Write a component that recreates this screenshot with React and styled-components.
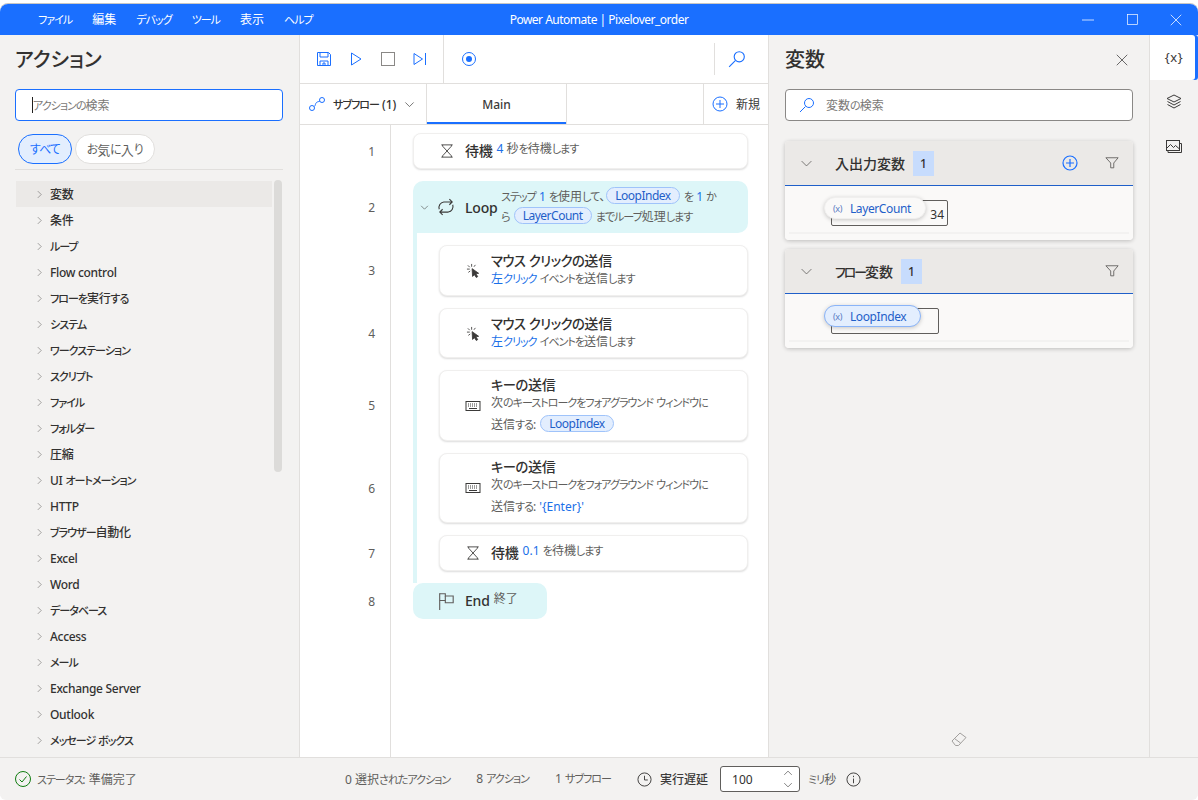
import { Children } from 'react';
import styled, { createGlobalStyle } from 'styled-components';

const BLUE = '#1a6fff';
const actions = ['変数', '条件', 'ループ', 'Flow control', 'フローを実行する', 'システム', 'ワークステーション', 'スクリプト', 'ファイル', 'フォルダー', '圧縮', 'UI オートメーション', 'HTTP', 'ブラウザー自動化', 'Excel', 'Word', 'データベース', 'Access', 'メール', 'Exchange Server', 'Outlook', 'メッセージ ボックス'];
const menus = ['ファイル', '編集', 'デバッグ', 'ツール', '表示', 'ヘルプ'];

//Kana in the target UI font is smaller than in Noto, so shrink those runs only.
const T = ({ children }) =>
  Children.map(children, (c) =>
    typeof c !== 'string'
      ? c
      : c.split(/([ぁ-ゖァ-ヶー]+)/).map((part, i) => (i % 2 ? <Kana key={i}>{part}</Kana> : part))
  );

//ICONS
const Svg = ({ size = 16, color = 'currentColor', w = 1, children }) => (
  <svg width={size} height={size} viewBox="0 0 16 16" fill="none" stroke={color} strokeWidth={w} style={{ display: 'block', flex: 'none' }}>
    {children}
  </svg>
);

const Chevron = ({ dir = 'right', size = 10, color = '#605e5c' }) => (
  <Svg size={size} color={color}>
    {dir === 'right' ? <path d="M5 2l6 6-6 6" /> : dir === 'up' ? <path d="M2 11l6-6 6 6" /> : <path d="M2 5l6 6 6-6" />}
  </Svg>
);
const SaveIcon = () => (
  <Svg size={16} color={BLUE}><path d="M1.500 1.500h11l2 2v11h-13z" /><path d="M4 1.500v4.500h8V1.500M4 14.500v-4.500h8v4.500M7 14.500v-2.500h2v2.500" /></Svg>
);
const PlayIcon = () => <Svg size={16} color={BLUE}><path d="M3.500 2l9.500 6-9.500 6z" /></Svg>;
const StopIcon = () => <Svg size={16} color="#8a8886"><rect x="1.500" y="1.500" width="13" height="13" /></Svg>;
const StepIcon = () => <Svg size={16} color={BLUE}><path d="M2 2.500l8.500 5.500-8.500 5.500z" /><path d="M13.500 2v12" /></Svg>;
const RecordIcon = () => (
  <Svg size={16} color={BLUE}><circle cx="8" cy="8" r="6.500" /><circle cx="8" cy="8" r="3" fill={BLUE} stroke="none" /></Svg>
);
const SearchIcon = ({ size = 18 }) => (
  <Svg size={size} color={BLUE}><circle cx="10" cy="6" r="4.500" /><path d="M6.500 9.500L1 15" /></Svg>
);
const SubflowIcon = () => (
  <Svg size={16} color={BLUE}><circle cx="3" cy="12" r="2.500" /><circle cx="13" cy="4" r="2.500" /><path d="M5.200 10.500c1.500-1 1-3 2.300-4s2-.8 3.200-1.200" /></Svg>
);
const PlusCircle = ({ size = 16, w = 1 }) => (
  <Svg size={size} color={BLUE} w={w}><circle cx="8" cy="8" r="7" /><path d="M8 4v8M4 8h8" /></Svg>
);
const Hourglass = () => (
  <Svg size={14} color="#3b3a39"><path d="M1.500 1h13M1.500 15h13M3 1v1.500L13 13.500V15M13 1v1.500L3 13.500V15" /></Svg>
);
const LoopIcon = () => (
  <Svg size={18} color="#3b3a39"><path d="M2 10A5 5 0 0 1 6 3.500h7.500M11 1l2.500 2.500L11 6" /><path d="M14 6a5 5 0 0 1-4 6.500H2.500M5 10l-2.500 2.500L5 15" /></Svg>
);
const ClickIcon = () => (
  <Svg size={15} color="#3b3a39" w={0.9}>
    <path d="M6 1v3M2 2.500l2 2M1 6.500h3M2.500 10l2-1.500M10 2l-1.500 2" />
    <path d="M6.500 6l7 5-3 .5 2 3-1.500 1-2-3-2 1.800z" fill="#3b3a39" />
  </Svg>
);
const KeyboardIcon = () => (
  <Svg size={16} color="#3b3a39"><rect x="1" y="3.500" width="14" height="9" /><path d="M3 6h10M3 8h10" strokeDasharray="1 1" /><path d="M4 10.500h8" /></Svg>
);
const FlagIcon = () => (
  <Svg size={18} color="#605e5c"><path d="M1.500 1v15" /><path d="M1.500 1.500h5v2h7v6h-7v-2h-5" /><path d="M6.500 3.500v4" /></Svg>
);
const FilterIcon = () => (
  <Svg size={14} color="#605e5c"><path d="M1 2h14L10 8v5.500H6.500V8z" /></Svg>
);
const CloseIcon = ({ size = 12, color = '#3b3a39' }) => <Svg size={size} color={color}><path d="M1 1l14 14M15 1L1 15" /></Svg>;
const LayersIcon = () => (
  <Svg size={16} color="#3b3a39"><path d="M8 1l7 3.500-7 3.500-7-3.500z" /><path d="M1.500 7.500L8 11l6.500-3.500M1.500 10.500L8 14l6.500-3.500" /></Svg>
);
const ImageIcon = () => (
  <Svg size={16} color="#3b3a39"><rect x="0.500" y="2.500" width="13" height="10" /><path d="M2 12.500v2h13.500v-9h-2M1 10l3.500-3.500 3 3 2-2 4 3.500" /></Svg>
);
const EraserIcon = () => (
  <Svg size={16} color="#a19f9d"><path d="M1 10l8-8 6 4.500-7.500 8H4.500z" /><path d="M3.500 7.500l6 4.500" /></Svg>
);
const CheckCircle = () => (
  <Svg size={16} color="#107c10"><circle cx="8" cy="8" r="7.500" /><path d="M4.500 8.500l2.500 2.500 4.500-5.500" /></Svg>
);
const ClockIcon = () => (
  <Svg size={15} color="#3b3a39"><circle cx="8" cy="8" r="7" /><path d="M8 4v4.500h3.500" /></Svg>
);
const InfoIcon = () => (
  <Svg size={15} color="#3b3a39"><circle cx="8" cy="8" r="7" /><path d="M8 7v5M8 4v1.500" /></Svg>
);

const App = () => (
  <>
    <GlobalStyle />
    <Window>
      <TitleBar>
        <MenuBar>{menus.map((m) => <MenuItem key={m}><T>{m}</T></MenuItem>)}</MenuBar>
        <WindowTitle>Power Automate | Pixelover_order</WindowTitle>
        <WindowControls>
          <WindowButton><Svg size={12} color="#fff"><path d="M0 8h16" /></Svg></WindowButton>
          <WindowButton><Svg size={11} color="#fff"><rect x="0.700" y="0.700" width="14.600" height="14.600" /></Svg></WindowButton>
          <WindowButton><CloseIcon size={12} color="#fff" /></WindowButton>
        </WindowControls>
      </TitleBar>

      <Main>
        <ActionsPanel>
          <PanelTitle>アクション</PanelTitle>
          <SearchBox $focused>
            <Caret />
            <Placeholder><T>アクションの検索</T></Placeholder>
          </SearchBox>
          <Pills>
            <Pill $active><T>すべて</T></Pill>
            <Pill><T>お気に入り</T></Pill>
          </Pills>
          <ActionList>
            <ActionItems>
              {actions.map((a, i) => (
                <ActionItem key={a} $hover={i === 0}>
                  <Chevron size={9} />
                  <span><T>{a}</T></span>
                </ActionItem>
              ))}
            </ActionItems>
            <ScrollThumb />
          </ActionList>
        </ActionsPanel>

        <Editor>
          <Toolbar>
            <ToolGroup>
              <ToolIcon><SaveIcon /></ToolIcon>
              <ToolIcon><PlayIcon /></ToolIcon>
              <ToolIcon><StopIcon /></ToolIcon>
              <ToolIcon><StepIcon /></ToolIcon>
            </ToolGroup>
            <RecordCell><RecordIcon /></RecordCell>
            <ToolSearch><SearchIcon size={18} /></ToolSearch>
          </Toolbar>
          <Tabs>
            <SubflowTab>
              <SubflowIcon />
              <span><T>サブフロー (1)</T></span>
              <Chevron dir="down" size={11} color="#3b3a39" />
            </SubflowTab>
            <MainTab>Main</MainTab>
            <NewTab>
              <PlusCircle size={16} />
              <span>新規</span>
            </NewTab>
          </Tabs>

          <Canvas>
            <Row>
              <LineNo>1</LineNo>
              <Slot>
                <Card $h={36}>
                  <CardIcon><Hourglass /></CardIcon>
                  <InlineBody>
                    <CardName>待機</CardName>
                    <CardDesc $raised><Val>4</Val> <T>秒を待機します</T></CardDesc>
                  </InlineBody>
                </Card>
              </Slot>
            </Row>
            <Row>
              <LineNo>2</LineNo>
              <Slot>
                <LoopCard>
                  <LoopChevron><Chevron dir="down" size={9} color="#3b3a39" /></LoopChevron>
                  <LoopIconCell><LoopIcon /></LoopIconCell>
                  <LoopName>Loop</LoopName>
                  <LoopDesc>
                    <T>ステップ </T><Val>1</Val><T> を使用して、</T><VarTag>LoopIndex</VarTag> <T>を </T><Val>1</Val><T> か</T><br />
                    <T>ら </T><VarTag>LayerCount</VarTag> <T>までループ処理します</T>
                  </LoopDesc>
                </LoopCard>
              </Slot>
            </Row>
            <Row $loop>
              <LineNo $loop>3</LineNo>
              <Slot>
                <LoopBody>
                  <Card $h={51}>
                    <CardIcon><ClickIcon /></CardIcon>
                    <StackBody $pad={3}>
                      <CardName><T>マウス クリックの送信</T></CardName>
                      <CardDesc><Val><T>左クリック</T></Val> <T>イベントを送信します</T></CardDesc>
                    </StackBody>
                  </Card>
                </LoopBody>
              </Slot>
            </Row>
            <Row $loop>
              <LineNo $loop>4</LineNo>
              <Slot>
                <LoopBody>
                  <Card $h={50}>
                    <CardIcon><ClickIcon /></CardIcon>
                    <StackBody $pad={3}>
                      <CardName><T>マウス クリックの送信</T></CardName>
                      <CardDesc><Val><T>左クリック</T></Val> <T>イベントを送信します</T></CardDesc>
                    </StackBody>
                  </Card>
                </LoopBody>
              </Slot>
            </Row>
            <Row $loop>
              <LineNo $loop>5</LineNo>
              <Slot>
                <LoopBody>
                  <Card $h={71}>
                    <CardIcon><KeyboardIcon /></CardIcon>
                    <StackBody>
                      <CardName><T>キーの送信</T></CardName>
                      <CardDesc><T>次のキーストロークをフォアグラウンド ウィンドウに</T></CardDesc>
                      <CardDesc $second><T>送信する: </T><VarTag>LoopIndex</VarTag></CardDesc>
                    </StackBody>
                  </Card>
                </LoopBody>
              </Slot>
            </Row>
            <Row $loop>
              <LineNo $loop>6</LineNo>
              <Slot>
                <LoopBody>
                  <Card $h={70}>
                    <CardIcon><KeyboardIcon /></CardIcon>
                    <StackBody>
                      <CardName><T>キーの送信</T></CardName>
                      <CardDesc><T>次のキーストロークをフォアグラウンド ウィンドウに</T></CardDesc>
                      <CardDesc $second><T>送信する: </T><Val>'{'{'}Enter{'}'}'</Val></CardDesc>
                    </StackBody>
                  </Card>
                </LoopBody>
              </Slot>
            </Row>
            <Row $loop>
              <LineNo $loop $last>7</LineNo>
              <Slot>
                <LoopBody $last>
                  <Card $h={36}>
                    <CardIcon><Hourglass /></CardIcon>
                    <InlineBody>
                      <CardName>待機</CardName>
                      <CardDesc $raised><Val>0.1</Val> <T>を待機します</T></CardDesc>
                    </InlineBody>
                  </Card>
                </LoopBody>
              </Slot>
            </Row>
            <Row $end>
              <LineNo>8</LineNo>
              <Slot>
                <EndCard>
                  <CardIcon><FlagIcon /></CardIcon>
                  <InlineBody>
                    <CardName>End</CardName>
                    <CardDesc $raised>終了</CardDesc>
                  </InlineBody>
                </EndCard>
              </Slot>
            </Row>
          </Canvas>
        </Editor>

        <VariablesPanel>
          <VarHead>
            <PanelTitle>変数</PanelTitle>
            <PanelClose><CloseIcon size={12} /></PanelClose>
          </VarHead>
          <SearchBox>
            <SearchIconCell><SearchIcon size={16} /></SearchIconCell>
            <Placeholder><T>変数の検索</T></Placeholder>
          </SearchBox>

          <Section $top={20}>
            <SectionHead>
              <Chevron dir="down" size={13} color="#605e5c" />
              <SectionTitle>入出力変数</SectionTitle>
              <Badge>1</Badge>
              <HeadTools>
                <PlusCircle size={16} w={1.200} />
                <FilterIcon />
              </HeadTools>
            </SectionHead>
            <SectionBody>
              <ValueBox $w={117}>
                <VarChip><XMark>(x)</XMark>LayerCount</VarChip>
                34
              </ValueBox>
            </SectionBody>
          </Section>

          <Section $top={9}>
            <SectionHead>
              <Chevron dir="down" size={13} color="#605e5c" />
              <SectionTitle><T>フロー変数</T></SectionTitle>
              <Badge>1</Badge>
              <HeadTools><FilterIcon /></HeadTools>
            </SectionHead>
            <SectionBody>
              <ValueBox $w={108}>
                <VarChip $selected><XMark>(x)</XMark>LoopIndex</VarChip>
              </ValueBox>
            </SectionBody>
          </Section>

          <EraserRow><EraserIcon /></EraserRow>
        </VariablesPanel>

        <SideRail>
          <RailTab $active>{'{x}'}</RailTab>
          <RailTab><LayersIcon /></RailTab>
          <RailTab><ImageIcon /></RailTab>
        </SideRail>
      </Main>

      <StatusBar>
        <StatusLeft>
          <CheckCircle />
          <span><T>ステータス: 準備完了</T></span>
        </StatusLeft>
        <StatusCounts>
          <span><T>0 選択されたアクション</T></span>
          <span><T>8 アクション</T></span>
          <span><T>1 サブフロー</T></span>
        </StatusCounts>
        <DelayGroup>
          <ClockIcon />
          <DelayLabel>実行遅延</DelayLabel>
          <Spinner>
            100
            <SpinArrows>
              <Chevron dir="up" size={10} color="#3b3a39" />
              <Chevron dir="down" size={10} color="#3b3a39" />
            </SpinArrows>
          </Spinner>
          <Unit><T>ミリ秒</T></Unit>
          <InfoIcon />
        </DelayGroup>
      </StatusBar>
    </Window>
  </>
);

//STYLING
const GlobalStyle = createGlobalStyle`
  html, body {
    margin: 0;
    padding: 0;
    background: #fff;
  }
  body {
    font-family: 'Noto Sans', 'Noto Sans CJK JP', sans-serif;
    font-size: 12px;
    font-feature-settings: 'palt';
    color: #323130;
    overflow: hidden;
    white-space: nowrap;
  }
`;

const Kana = styled.span`
  font-size: 0.92em;
  letter-spacing: -1px;
`;

const Window = styled.div`
  width: 1198px;
  height: 796px;
  margin-top: 4px;
  display: flex;
  flex-direction: column;
  border-radius: 8px 8px 6px 6px;
  overflow: hidden;
  box-shadow: 0 -1px 0 #c8c6c4;
`;

const TitleBar = styled.div`
  height: 31px;
  flex: none;
  display: grid;
  grid-template-columns: 1fr auto 1fr;
  align-items: center;
  background: ${BLUE};
  color: #fff;
`;

const MenuBar = styled.div`
  display: flex;
  gap: 20px;
  padding-left: 38px;
`;

const MenuItem = styled.span`
  line-height: 31px;
`;

const WindowTitle = styled.div`
  font-size: 12px;
  letter-spacing: -0.5px;
`;

const WindowControls = styled.div`
  display: flex;
  justify-content: flex-end;
`;

const WindowButton = styled.div`
  width: 44px;
  height: 31px;
  display: flex;
  align-items: center;
  justify-content: center;
`;

const Main = styled.div`
  flex: 1;
  min-height: 0;
  display: flex;
`;

const ActionsPanel = styled.div`
  width: 300px;
  flex: none;
  padding: 0 16px 0 15px;
  box-sizing: border-box;
  display: flex;
  flex-direction: column;
  background: #f3f2f1;
  border-right: 1px solid #e1dfdd;
`;

const PanelTitle = styled.div`
  font-size: 20px;
  font-weight: 500;
  line-height: 50px;
  height: 54px;
  color: #323130;
`;

const PanelClose = styled.div`
  margin-bottom: 4px;
`;

const SearchBox = styled.div`
  height: 32px;
  flex: none;
  box-sizing: border-box;
  display: flex;
  align-items: center;
  background: #fff;
  border: 1px solid ${(p) => (p.$focused ? BLUE : '#8a8886')};
  border-radius: 4px;
  padding-left: 16px;
`;

const Caret = styled.span`
  width: 1px;
  height: 16px;
  background: #201f1e;
`;

const Placeholder = styled.span`
  color: #797775;
  font-size: 12px;
`;

const SearchIconCell = styled.span`
  margin-right: 11px;
  margin-left: -3px;
`;

const Pills = styled.div`
  display: flex;
  gap: 3px;
  padding: 13px 0 5px 3px;
  border-bottom: 1px solid #e1dfdd;
`;

const Pill = styled.div`
  height: 30px;
  box-sizing: border-box;
  padding: 0 11px;
  display: flex;
  align-items: center;
  border-radius: 15px;
  font-size: 13px;
  border: 1px solid ${(p) => (p.$active ? BLUE : '#e1dfdd')};
  background: ${(p) => (p.$active ? '#e3eefe' : '#fff')};
  color: ${(p) => (p.$active ? BLUE : '#605e5c')};
`;

const ActionList = styled.div`
  flex: 1;
  min-height: 0;
  display: flex;
  align-items: flex-start;
  gap: 2px;
  padding-top: 11px;
  overflow: hidden;
`;

const ActionItems = styled.div`
  width: 256px;
  margin-left: 1px;
  flex: none;
`;

const ActionItem = styled.div`
  height: 26px;
  display: flex;
  align-items: center;
  gap: 6px;
  padding-left: 19px;
  background: ${(p) => (p.$hover ? '#ebe9e7' : 'transparent')};
  font-weight: 500;
  letter-spacing: -0.3px;
  color: #323130;
`;

const ScrollThumb = styled.div`
  width: 8px;
  height: 292px;
  margin-top: -1px;
  border-radius: 4px;
  background: #dcdbd9;
`;

const Editor = styled.div`
  width: 468px;
  flex: none;
  display: flex;
  flex-direction: column;
  background: #fff;
  border-right: 1px solid #e1dfdd;
`;

const Toolbar = styled.div`
  height: 49px;
  flex: none;
  box-sizing: border-box;
  display: flex;
  border-bottom: 1px solid #e1dfdd;
`;

const ToolGroup = styled.div`
  width: 144px;
  box-sizing: border-box;
  padding-left: 16px;
  display: flex;
  align-items: center;
  gap: 16px;
  border-right: 1px solid #e1dfdd;
`;

const ToolIcon = styled.div`
  width: 16px;
  display: flex;
  justify-content: center;
`;

const RecordCell = styled.div`
  padding-left: 17px;
  display: flex;
  align-items: center;
`;

const ToolSearch = styled.div`
  margin: 8px 0 8px auto;
  width: 54px;
  padding-left: 13px;
  box-sizing: border-box;
  display: flex;
  align-items: center;
  border-left: 1px solid #e1dfdd;
`;

const Tabs = styled.div`
  height: 41px;
  flex: none;
  box-sizing: border-box;
  display: flex;
  border-bottom: 1px solid #e1dfdd;
`;

const SubflowTab = styled.div`
  width: 127px;
  flex: none;
  box-sizing: border-box;
  padding-left: 9px;
  display: flex;
  align-items: center;
  gap: 8px;
  font-size: 12px;
  font-weight: 500;
  border-right: 1px solid #e1dfdd;
`;

const MainTab = styled.div`
  width: 140px;
  flex: none;
  box-sizing: border-box;
  display: flex;
  align-items: center;
  justify-content: center;
  font-weight: 500;
  color: #3b3a39;
  box-shadow: inset 0 -2px 0 ${BLUE};
  border-right: 1px solid #e1dfdd;
`;

const NewTab = styled.div`
  margin-left: auto;
  width: 65px;
  box-sizing: border-box;
  padding-left: 8px;
  display: flex;
  align-items: center;
  gap: 8px;
  border-left: 1px solid #e1dfdd;
  color: #3b3a39;
`;

const Canvas = styled.div`
  flex: 1;
  min-height: 0;
  overflow: hidden;
  padding-top: 8px;
  display: flex;
  flex-direction: column;
  background: linear-gradient(#e1dfdd, #e1dfdd) 90px 0 / 1px 100% no-repeat #fff;
`;

const Row = styled.div`
  display: grid;
  grid-template-columns: 91px 1fr;
  margin-bottom: ${(p) => (p.$loop || p.$end ? 0 : 12)}px;
  &:nth-child(2) {
    margin-bottom: 0;
  }
`;

const LineNo = styled.div`
  display: flex;
  align-items: center;
  justify-content: flex-end;
  padding: ${(p) => (p.$loop ? 12 : 0)}px 16px ${(p) => (p.$last ? 12 : 0)}px 0;
  color: #605e5c;
  font-size: 12px;
`;

const Slot = styled.div`
  padding: 0 20px 0 22px;
`;

const Card = styled.div`
  height: ${(p) => p.$h}px;
  box-sizing: border-box;
  display: flex;
  align-items: center;
  padding-left: 16px;
  background: #fff;
  border: 1px solid #f0efee;
  border-radius: 8px;
  box-shadow: 0 1px 2px rgba(0, 0, 0, 0.14);
`;

const CardIcon = styled.div`
  width: 36px;
  flex: none;
  display: flex;
  justify-content: center;
  margin-left: -1px;
`;

const InlineBody = styled.div`
  display: flex;
  align-items: baseline;
  gap: 4px;
`;

const StackBody = styled.div`
  display: flex;
  flex-direction: column;
  padding-bottom: ${(p) => p.$pad || 0}px;
`;

const CardName = styled.span`
  font-size: 14px;
  font-weight: 500;
  line-height: 20px;
  letter-spacing: -0.2px;
  color: #323130;
  & > span {
    font-size: 0.95em;
    letter-spacing: -0.5px;
  }
`;

const CardDesc = styled.span`
  font-size: 12px;
  color: #605e5c;
  line-height: ${(p) => (p.$second ? 24 : 16)}px;
  margin-top: ${(p) => (p.$second ? 2 : 0)}px;
  position: relative;
  top: ${(p) => (p.$raised ? -3 : 0)}px;
`;

const Val = styled.span`
  color: #1a6fe8;
`;

const VarTag = styled.span`
  display: inline-block;
  height: 17px;
  line-height: 15px;
  box-sizing: border-box;
  padding: 0 8px;
  margin: 0 1px;
  border: 1px solid #9fc3fa;
  border-radius: 9px;
  background: #e3eefe;
  color: #1f5fc9;
  font-size: 12px;
  letter-spacing: -0.5px;
  vertical-align: 1px;
`;

const LoopCard = styled.div`
  height: 52px;
  box-sizing: border-box;
  display: flex;
  align-items: center;
  padding-left: 7px;
  background: #ddf6f8;
  border-radius: 10px 10px 10px 0;
`;

const LoopChevron = styled.div`
  width: 12px;
`;

const LoopIconCell = styled.div`
  width: 36px;
  padding-left: 5px;
  box-sizing: border-box;
`;

const LoopName = styled.span`
  font-size: 14px;
  font-weight: 500;
  letter-spacing: -0.2px;
  width: 36px;
  flex: none;
  margin-left: -3px;
`;

const LoopDesc = styled.div`
  font-size: 12px;
  line-height: 20px;
  color: #605e5c;
`;

const LoopBody = styled.div`
  border-left: 4px solid #ddf6f8;
  padding: 12px 0 ${(p) => (p.$last ? 12 : 0)}px 22px;
`;

const EndCard = styled.div`
  width: 134px;
  height: 36px;
  box-sizing: border-box;
  display: flex;
  align-items: center;
  padding-left: 17px;
  background: #ddf6f8;
  border-radius: 10px;
`;

const VariablesPanel = styled.div`
  width: 380px;
  flex: none;
  box-sizing: border-box;
  padding: 0 16px;
  display: flex;
  flex-direction: column;
  background: #f3f2f1;
`;

const VarHead = styled.div`
  display: flex;
  align-items: center;
  justify-content: space-between;
  padding-right: 5px;
`;

const Section = styled.section`
  margin-top: ${(p) => p.$top}px;
  border-radius: 4px;
  background: #faf9f8;
  box-shadow: 0 1px 4px rgba(0, 0, 0, 0.22);
  overflow: hidden;
`;

const SectionHead = styled.div`
  height: 45px;
  box-sizing: border-box;
  display: flex;
  align-items: center;
  padding: 0 14px 0 15px;
  background: #ebe9e7;
  border-bottom: 1px solid #1f5fc9;
`;

const SectionTitle = styled.span`
  margin-left: 22px;
  font-size: 14px;
  font-weight: 500;
  & > span {
    letter-spacing: -2px;
  }
`;

const Badge = styled.span`
  margin-left: 8px;
  width: 21px;
  height: 25px;
  display: flex;
  align-items: center;
  justify-content: center;
  background: #c7dcfd;
  font-weight: 500;
`;

const HeadTools = styled.div`
  margin-left: auto;
  display: flex;
  align-items: center;
  gap: 27px;
`;

const SectionBody = styled.div`
  height: 54px;
  box-sizing: border-box;
  padding: 14px 0 0 46px;
  background: linear-gradient(#f3f2f1, #f3f2f1) 4px 46px / calc(100% - 8px) 2px no-repeat #faf9f8;
`;

const ValueBox = styled.div`
  position: relative;
  width: ${(p) => p.$w}px;
  height: 26px;
  box-sizing: border-box;
  border: 1px solid #605e5c;
  border-radius: 2px;
  display: flex;
  align-items: center;
  justify-content: flex-end;
  padding: 2px 3px 0 0;
  font-size: 12px;
`;

const VarChip = styled.span`
  position: absolute;
  left: -8px;
  top: -4px;
  height: 22px;
  box-sizing: border-box;
  display: flex;
  align-items: center;
  padding: 0 14px 0 8px;
  border-radius: 11px;
  background: ${(p) => (p.$selected ? '#e3eefe' : '#faf9f8')};
  border: 1px solid ${(p) => (p.$selected ? '#8ab4f8' : '#f0efee')};
  box-shadow: 0 1px 4px rgba(0, 0, 0, 0.2);
  color: #1f5fc9;
  font-size: 12px;
  letter-spacing: -0.4px;
`;

const XMark = styled.span`
  font-size: 9px;
  margin-right: 8px;
  color: #5a7cc4;
`;

const EraserRow = styled.div`
  margin-top: auto;
  padding-bottom: 10px;
  display: flex;
  justify-content: center;
`;

const SideRail = styled.div`
  flex: 1;
  display: flex;
  flex-direction: column;
  background: #f3f2f1;
  border-left: 1px solid #e1dfdd;
`;

const RailTab = styled.div`
  height: ${(p) => (p.$active ? 45 : 44)}px;
  box-sizing: border-box;
  padding-bottom: ${(p) => (p.$active ? 2 : 0)}px;
  display: flex;
  align-items: center;
  justify-content: center;
  font-size: 13px;
  letter-spacing: 0.5px;
  color: #3b3a39;
  background: ${(p) => (p.$active ? '#fff' : 'transparent')};
  box-shadow: ${(p) => (p.$active ? `inset -3px 0 0 ${BLUE}` : 'none')};
  border-radius: 0 3px 3px 0;
`;

const StatusBar = styled.div`
  height: 43px;
  flex: none;
  box-sizing: border-box;
  display: flex;
  align-items: center;
  background: #f3f2f1;
  border-top: 1px solid #e1dfdd;
  padding-left: 15px;
  color: #605e5c;
`;

const StatusLeft = styled.div`
  width: 330px;
  display: flex;
  align-items: center;
  gap: 6px;
`;

const StatusCounts = styled.div`
  width: 292px;
  display: flex;
  gap: 26px;
`;

const DelayGroup = styled.div`
  display: flex;
  align-items: center;
  gap: 8px;
`;

const DelayLabel = styled.span`
  font-weight: 500;
  color: #3b3a39;
  margin-right: 4px;
`;

const Spinner = styled.div`
  width: 80px;
  height: 26px;
  box-sizing: border-box;
  display: flex;
  align-items: center;
  justify-content: space-between;
  padding: 0 6px 0 11px;
  background: #fff;
  border: 1px solid #605e5c;
  border-radius: 3px;
  color: #323130;
`;

const SpinArrows = styled.div`
  display: flex;
  flex-direction: column;
  gap: 2px;
`;

const Unit = styled.span`
  color: #605e5c;
  margin-right: 2px;
`;

export default App;
